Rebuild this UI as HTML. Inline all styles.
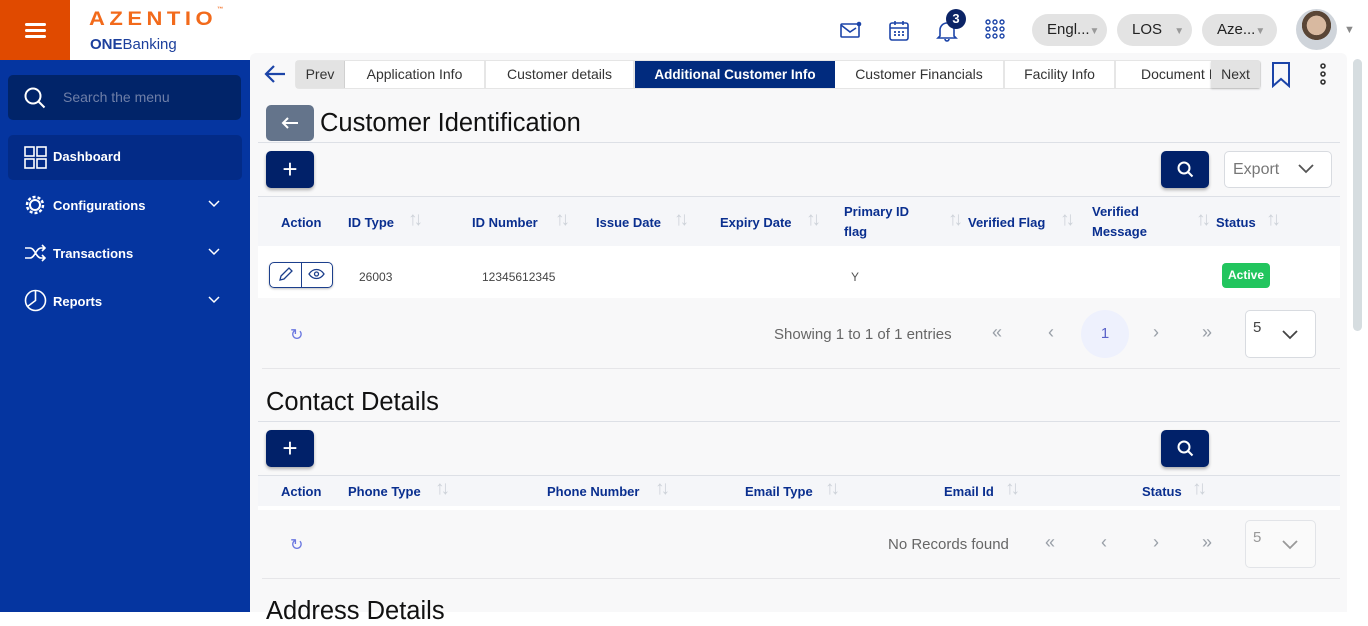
<!DOCTYPE html>
<html><head><meta charset="utf-8"><style>
*{box-sizing:border-box;margin:0;padding:0}
body{width:1368px;height:612px;overflow:hidden;background:#fff;font-family:"Liberation Sans",sans-serif;position:relative}
.a{position:absolute}
.side{left:0;top:60px;width:250px;height:552px;background:#0535a0}
.nav{color:#fff;font-size:13px;font-weight:bold}
.th{font-size:13px;font-weight:bold;color:#0a2f8f;position:absolute}
.srt{position:absolute;color:#cdd2d9;font-size:19px;letter-spacing:-4px;font-weight:300}
.tab{position:absolute;top:61px;height:27px;background:#fff;border-right:2px solid #e6e6e6;font-size:14px;color:#333;text-align:center;line-height:27px}
.btn{position:absolute;background:#012169;border-radius:5px;box-shadow:0 2px 3px rgba(0,0,0,.3)}
.plus{position:absolute;color:#fff;font-size:26px;line-height:37px;width:48px;text-align:center}
.pill{position:absolute;top:14px;height:32px;background:#e3e3e3;border-radius:16px;font-size:15px;color:#222;line-height:32px}
.pg{position:absolute;color:#9aa0a8;font-size:18px}
.hr{position:absolute;height:1px;background:#dde0e6}
</style></head><body>
<div class="a" style="left:0;top:0;width:70px;height:60px;background:#e04a00"></div>
<div class="a" style="left:25px;top:23px;width:21px;height:3px;background:#fff;border-radius:2px;box-shadow:0 6px 0 #fff,0 12px 0 #fff"></div>
<div class="a" style="left:89px;top:7px;font-size:22px;font-weight:bold;color:#f26a1b;letter-spacing:4.5px;transform:scaleY(0.9);transform-origin:top left">AZENTIO<span style="font-size:6px;vertical-align:top;letter-spacing:0">™</span></div>
<div class="a" style="left:90px;top:36px;font-size:15px;color:#1c3f9c"><b>ONE</b>Banking</div>
<div class="side a"></div>
<div class="a" style="left:8px;top:75px;width:233px;height:45px;background:#012469;border-radius:5px"></div>
<svg class="a" style="left:23px;top:86px" width="24" height="24" viewBox="0 0 24 24" fill="none" stroke="#fff" stroke-width="2"><circle cx="10" cy="10" r="7.5"/><path d="M15.5 15.5l6 6"/></svg>
<div class="a" style="left:63px;top:89px;font-size:14px;color:#6f7fa8">Search the menu</div>
<div class="a" style="left:8px;top:135px;width:234px;height:45px;background:#032b87;border-radius:5px"></div>
<svg class="a" style="left:24px;top:146px" width="23" height="23" fill="none" stroke="#fff" stroke-width="1.6"><rect x="1" y="1" width="9" height="9"/><rect x="13" y="1" width="9" height="9"/><rect x="1" y="13" width="9" height="9"/><rect x="13" y="13" width="9" height="9"/></svg>
<div class="a nav" style="left:53px;top:149px">Dashboard</div>
<svg class="a" style="left:24px;top:194px" width="22" height="22" fill="none" stroke="#fff" stroke-width="2.5"><circle cx="11" cy="11" r="8" stroke-dasharray="3 2"/><circle cx="11" cy="11" r="5" stroke-width="2"/></svg>
<div class="a nav" style="left:53px;top:198px">Configurations</div>
<svg class="a" style="left:24px;top:244px" width="22" height="18" fill="none" stroke="#fff" stroke-width="1.6"><path d="M1 4h5c5 0 6 10 11 10h4M1 14h5c5 0 6-10 11-10h4M18 1l3 3-3 3M18 11l3 3-3 3"/></svg>
<div class="a nav" style="left:53px;top:246px">Transactions</div>
<svg class="a" style="left:24px;top:289px" width="23" height="23" fill="none" stroke="#fff" stroke-width="1.6"><circle cx="11.5" cy="11.5" r="10"/><path d="M11.5 1.5v10l-8 6"/></svg>
<div class="a nav" style="left:53px;top:294px">Reports</div>
<svg class="a" style="left:208px;top:200px" width="12" height="8" fill="none" stroke="#fff" stroke-width="1.5"><path d="M1 1l5 5 5-5"/></svg>
<svg class="a" style="left:208px;top:248px" width="12" height="8" fill="none" stroke="#fff" stroke-width="1.5"><path d="M1 1l5 5 5-5"/></svg>
<svg class="a" style="left:208px;top:296px" width="12" height="8" fill="none" stroke="#fff" stroke-width="1.5"><path d="M1 1l5 5 5-5"/></svg>

<svg class="a" style="left:840px;top:21px" width="22" height="18" fill="none" stroke="#1c44a8" stroke-width="1.6"><rect x="1" y="3" width="18" height="13" rx="1"/><path d="M1 4l9 7 6-4"/><circle cx="19" cy="3" r="2.3" fill="#1c44a8" stroke="none"/></svg>
<svg class="a" style="left:889px;top:20px" width="20" height="21" fill="none" stroke="#1c44a8" stroke-width="1.6"><rect x="1" y="3" width="18" height="17" rx="2"/><path d="M1 8h18M6 1v4M14 1v4"/><path d="M5 12h2M9 12h2M13 12h2M5 15h2M9 15h2M13 15h2" stroke-width="1.8"/></svg>
<svg class="a" style="left:936px;top:20px" width="22" height="22" fill="none" stroke="#1c44a8" stroke-width="1.6"><path d="M4 16V10a7 7 0 0 1 14 0v6l2 2H2z M9 19a2 2 0 0 0 4 0"/></svg>
<div class="a" style="left:946px;top:9px;width:20px;height:20px;border-radius:50%;background:#0c2466;color:#fff;font-size:13px;font-weight:bold;text-align:center;line-height:20px">3</div>
<svg class="a" style="left:985px;top:19px" width="20" height="20" fill="none" stroke="#1c44a8" stroke-width="1.4"><circle cx="3" cy="3" r="2"/><circle cx="10" cy="3" r="2"/><circle cx="17" cy="3" r="2"/><circle cx="3" cy="10" r="2"/><circle cx="10" cy="10" r="2"/><circle cx="17" cy="10" r="2"/><circle cx="3" cy="17" r="2"/><circle cx="10" cy="17" r="2"/><circle cx="17" cy="17" r="2"/></svg>
<div class="pill" style="left:1032px;width:75px;padding-left:15px">Engl...<span style="color:#999;font-size:10px">▼</span></div>
<div class="pill" style="left:1117px;width:75px;padding-left:15px">LOS <span style="color:#999;font-size:10px;margin-left:8px">▼</span></div>
<div class="pill" style="left:1202px;width:75px;padding-left:15px">Aze...<span style="color:#999;font-size:10px">▼</span></div>
<div class="a" style="left:1296px;top:9px;width:41px;height:41px;border-radius:50%;background:radial-gradient(circle at 50% 40%,#d8b9a0 0 30%,#5a4636 31% 45%,#cfd4da 46%)"></div>
<div class="a" style="left:1344px;top:24px;font-size:11px;color:#888">▼</div>

<div class="a" style="left:250px;top:53px;width:1097px;height:559px;background:#f8f8f9;border-radius:6px 6px 0 0"></div>
<div class="a" style="left:1353px;top:59px;width:9px;height:272px;background:#d6dde0;border-radius:5px"></div>
<svg class="a" style="left:264px;top:64px" width="22" height="20" fill="none" stroke="#1c44a8" stroke-width="2.2"><path d="M21 10H2M10 2l-8 8 8 8"/></svg>
<div class="a" style="left:295px;top:60px;width:966px;height:29px;background:#e5e5e5;border-radius:4px"></div>
<div class="tab" style="left:296px;width:49px;background:#e3e3e3;border-right:1px solid #d0d0d0">Prev</div>
<div class="tab" style="left:345px;width:141px">Application Info</div>
<div class="tab" style="left:486px;width:149px">Customer details</div>
<div class="tab" style="left:635px;width:200px;background:#012b7e;color:#fff;font-weight:bold;border:none;font-size:13.5px">Additional Customer Info</div>
<div class="tab" style="left:835px;width:170px">Customer Financials</div>
<div class="tab" style="left:1005px;width:111px">Facility Info</div>
<div class="tab" style="left:1116px;width:96px;overflow:hidden;text-align:left;padding-left:25px;white-space:nowrap;border:none">Document I</div>
<div class="tab" style="left:1211px;width:49px;background:#e3e3e3;border:none;box-shadow:0 1px 2px rgba(0,0,0,.2)">Next</div>
<svg class="a" style="left:1271px;top:62px" width="20" height="26" fill="none" stroke="#1c44a8" stroke-width="2"><path d="M2 1h16v23l-8-7-8 7z"/></svg>
<svg class="a" style="left:1318px;top:62px" width="10" height="26" fill="none" stroke="#333" stroke-width="1.6"><circle cx="5" cy="4" r="2"/><circle cx="5" cy="12" r="2"/><circle cx="5" cy="20" r="2"/></svg>

<div class="a" style="left:266px;top:105px;width:48px;height:36px;background:#64748b;border-radius:5px"></div>
<svg class="a" style="left:281px;top:116px" width="18" height="14" fill="none" stroke="#fff" stroke-width="2"><path d="M17 7H2M7 2L2 7l5 5"/></svg>
<div class="a" style="left:320px;top:109px;font-size:25.5px;color:#111">Customer Identification</div>
<div class="hr" style="left:258px;top:142px;width:1082px"></div>
<div class="btn" style="left:266px;top:151px;width:48px;height:37px"></div>
<div class="plus" style="left:266px;top:151px">+</div>
<div class="btn" style="left:1161px;top:151px;width:48px;height:37px"></div>
<svg class="a" style="left:1177px;top:161px" width="17" height="17" fill="none" stroke="#fff" stroke-width="2"><circle cx="7" cy="7" r="5.5"/><path d="M11 11l4.5 4.5"/></svg>
<div class="a" style="left:1224px;top:151px;width:108px;height:37px;border:1px solid #d8dbe0;border-radius:5px;background:#fff;font-size:16px;color:#777;padding:9px 0 0 8px">Export</div>
<svg class="a" style="left:1298px;top:164px" width="16" height="10" fill="none" stroke="#555" stroke-width="1.8"><path d="M1 1l7 7 7-7"/></svg>
<div class="hr" style="left:258px;top:196px;width:1082px"></div>
<div class="a" style="left:258px;top:197px;width:1082px;height:49px;background:#f5f6f9"></div>
<div class="th" style="left:281px;top:215px">Action</div>
<div class="th" style="left:348px;top:215px">ID Type</div><div class="srt" style="left:408px;top:209px">↑↓</div>
<div class="th" style="left:472px;top:215px">ID Number</div><div class="srt" style="left:555px;top:209px">↑↓</div>
<div class="th" style="left:596px;top:215px">Issue Date</div><div class="srt" style="left:674px;top:209px">↑↓</div>
<div class="th" style="left:720px;top:215px">Expiry Date</div><div class="srt" style="left:806px;top:209px">↑↓</div>
<div class="th" style="left:844px;top:202px;line-height:20px">Primary ID<br>flag</div><div class="srt" style="left:948px;top:209px">↑↓</div>
<div class="th" style="left:968px;top:215px">Verified Flag</div><div class="srt" style="left:1060px;top:209px">↑↓</div>
<div class="th" style="left:1092px;top:202px;line-height:20px">Verified<br>Message</div><div class="srt" style="left:1196px;top:209px">↑↓</div>
<div class="th" style="left:1216px;top:215px">Status</div><div class="srt" style="left:1266px;top:209px">↑↓</div>
<div class="a" style="left:258px;top:246px;width:1082px;height:52px;background:#fff"></div>
<div class="a" style="left:269px;top:262px;width:64px;height:26px;border:1px solid #1c3f8c;border-radius:5px;box-shadow:0 1px 2px rgba(0,0,0,.25)"></div>
<div class="a" style="left:301px;top:262px;width:1px;height:26px;background:#1c3f8c"></div>
<svg class="a" style="left:278px;top:267px" width="15" height="15" fill="none" stroke="#1c3f8c" stroke-width="1.3"><path d="M2 13l1-4 8-8 3 3-8 8z"/></svg>
<svg class="a" style="left:308px;top:268px" width="17" height="12" fill="none" stroke="#1c3f8c" stroke-width="1.3"><path d="M1 6c4-6 11-6 15 0-4 6-11 6-15 0z"/><circle cx="8.5" cy="6" r="2"/></svg>
<div class="a" style="left:359px;top:270px;font-size:12px;color:#444">26003</div>
<div class="a" style="left:482px;top:270px;font-size:12px;color:#444">12345612345</div>
<div class="a" style="left:851px;top:270px;font-size:12px;color:#555">Y</div>
<div class="a" style="left:1222px;top:263px;width:48px;height:25px;background:#22c55e;border-radius:4px;color:#fff;font-size:12px;font-weight:bold;text-align:center;line-height:25px">Active</div>
<div class="a" style="left:290px;top:325px;color:#6b78e0;font-size:16px">↻</div>
<div class="a" style="left:774px;top:326px;font-size:15px;color:#666">Showing 1 to 1 of 1 entries</div>
<div class="pg" style="left:992px;top:322px">«</div><div class="pg" style="left:1048px;top:322px">‹</div>
<div class="a" style="left:1081px;top:310px;width:48px;height:48px;border-radius:50%;background:#eef1fd;color:#5b63c9;font-size:15px;text-align:center;line-height:48px">1</div>
<div class="pg" style="left:1153px;top:322px">›</div><div class="pg" style="left:1202px;top:322px">»</div>
<div class="a" style="left:1245px;top:310px;width:71px;height:48px;border:1px solid #d8dbe0;border-radius:5px;background:#fff;font-size:15px;color:#444;padding:8px 0 0 7px">5</div>
<svg class="a" style="left:1282px;top:330px" width="16" height="10" fill="none" stroke="#444" stroke-width="1.8"><path d="M1 1l7 7 7-7"/></svg>
<div class="hr" style="left:262px;top:368px;width:1078px;background:#e6e6e9"></div>

<div class="a" style="left:266px;top:388px;font-size:25.5px;color:#111">Contact Details</div>
<div class="hr" style="left:258px;top:421px;width:1082px"></div>
<div class="btn" style="left:266px;top:430px;width:48px;height:37px"></div>
<div class="plus" style="left:266px;top:430px">+</div>
<div class="btn" style="left:1161px;top:430px;width:48px;height:37px"></div>
<svg class="a" style="left:1177px;top:440px" width="17" height="17" fill="none" stroke="#fff" stroke-width="2"><circle cx="7" cy="7" r="5.5"/><path d="M11 11l4.5 4.5"/></svg>
<div class="hr" style="left:258px;top:475px;width:1082px"></div>
<div class="a" style="left:258px;top:476px;width:1082px;height:30px;background:#f5f6f9"></div>
<div class="a" style="left:258px;top:506px;width:1082px;height:4px;background:#fff"></div>
<div class="th" style="left:281px;top:484px">Action</div>
<div class="th" style="left:348px;top:484px">Phone Type</div><div class="srt" style="left:435px;top:478px">↑↓</div>
<div class="th" style="left:547px;top:484px">Phone Number</div><div class="srt" style="left:655px;top:478px">↑↓</div>
<div class="th" style="left:745px;top:484px">Email Type</div><div class="srt" style="left:825px;top:478px">↑↓</div>
<div class="th" style="left:944px;top:484px">Email Id</div><div class="srt" style="left:1005px;top:478px">↑↓</div>
<div class="th" style="left:1142px;top:484px">Status</div><div class="srt" style="left:1192px;top:478px">↑↓</div>
<div class="a" style="left:290px;top:535px;color:#6b78e0;font-size:16px">↻</div>
<div class="a" style="left:888px;top:536px;font-size:15px;color:#666">No Records found</div>
<div class="pg" style="left:1045px;top:532px">«</div><div class="pg" style="left:1101px;top:532px">‹</div>
<div class="pg" style="left:1153px;top:532px">›</div><div class="pg" style="left:1202px;top:532px">»</div>
<div class="a" style="left:1245px;top:520px;width:71px;height:48px;border:1px solid #e2e4e8;border-radius:5px;background:#fafafa;font-size:15px;color:#999;padding:8px 0 0 7px">5</div>
<svg class="a" style="left:1282px;top:540px" width="16" height="10" fill="none" stroke="#999" stroke-width="1.8"><path d="M1 1l7 7 7-7"/></svg>
<div class="hr" style="left:262px;top:578px;width:1078px;background:#e6e6e9"></div>
<div class="a" style="left:266px;top:597px;font-size:25.5px;color:#111">Address Details</div>
</body></html>
